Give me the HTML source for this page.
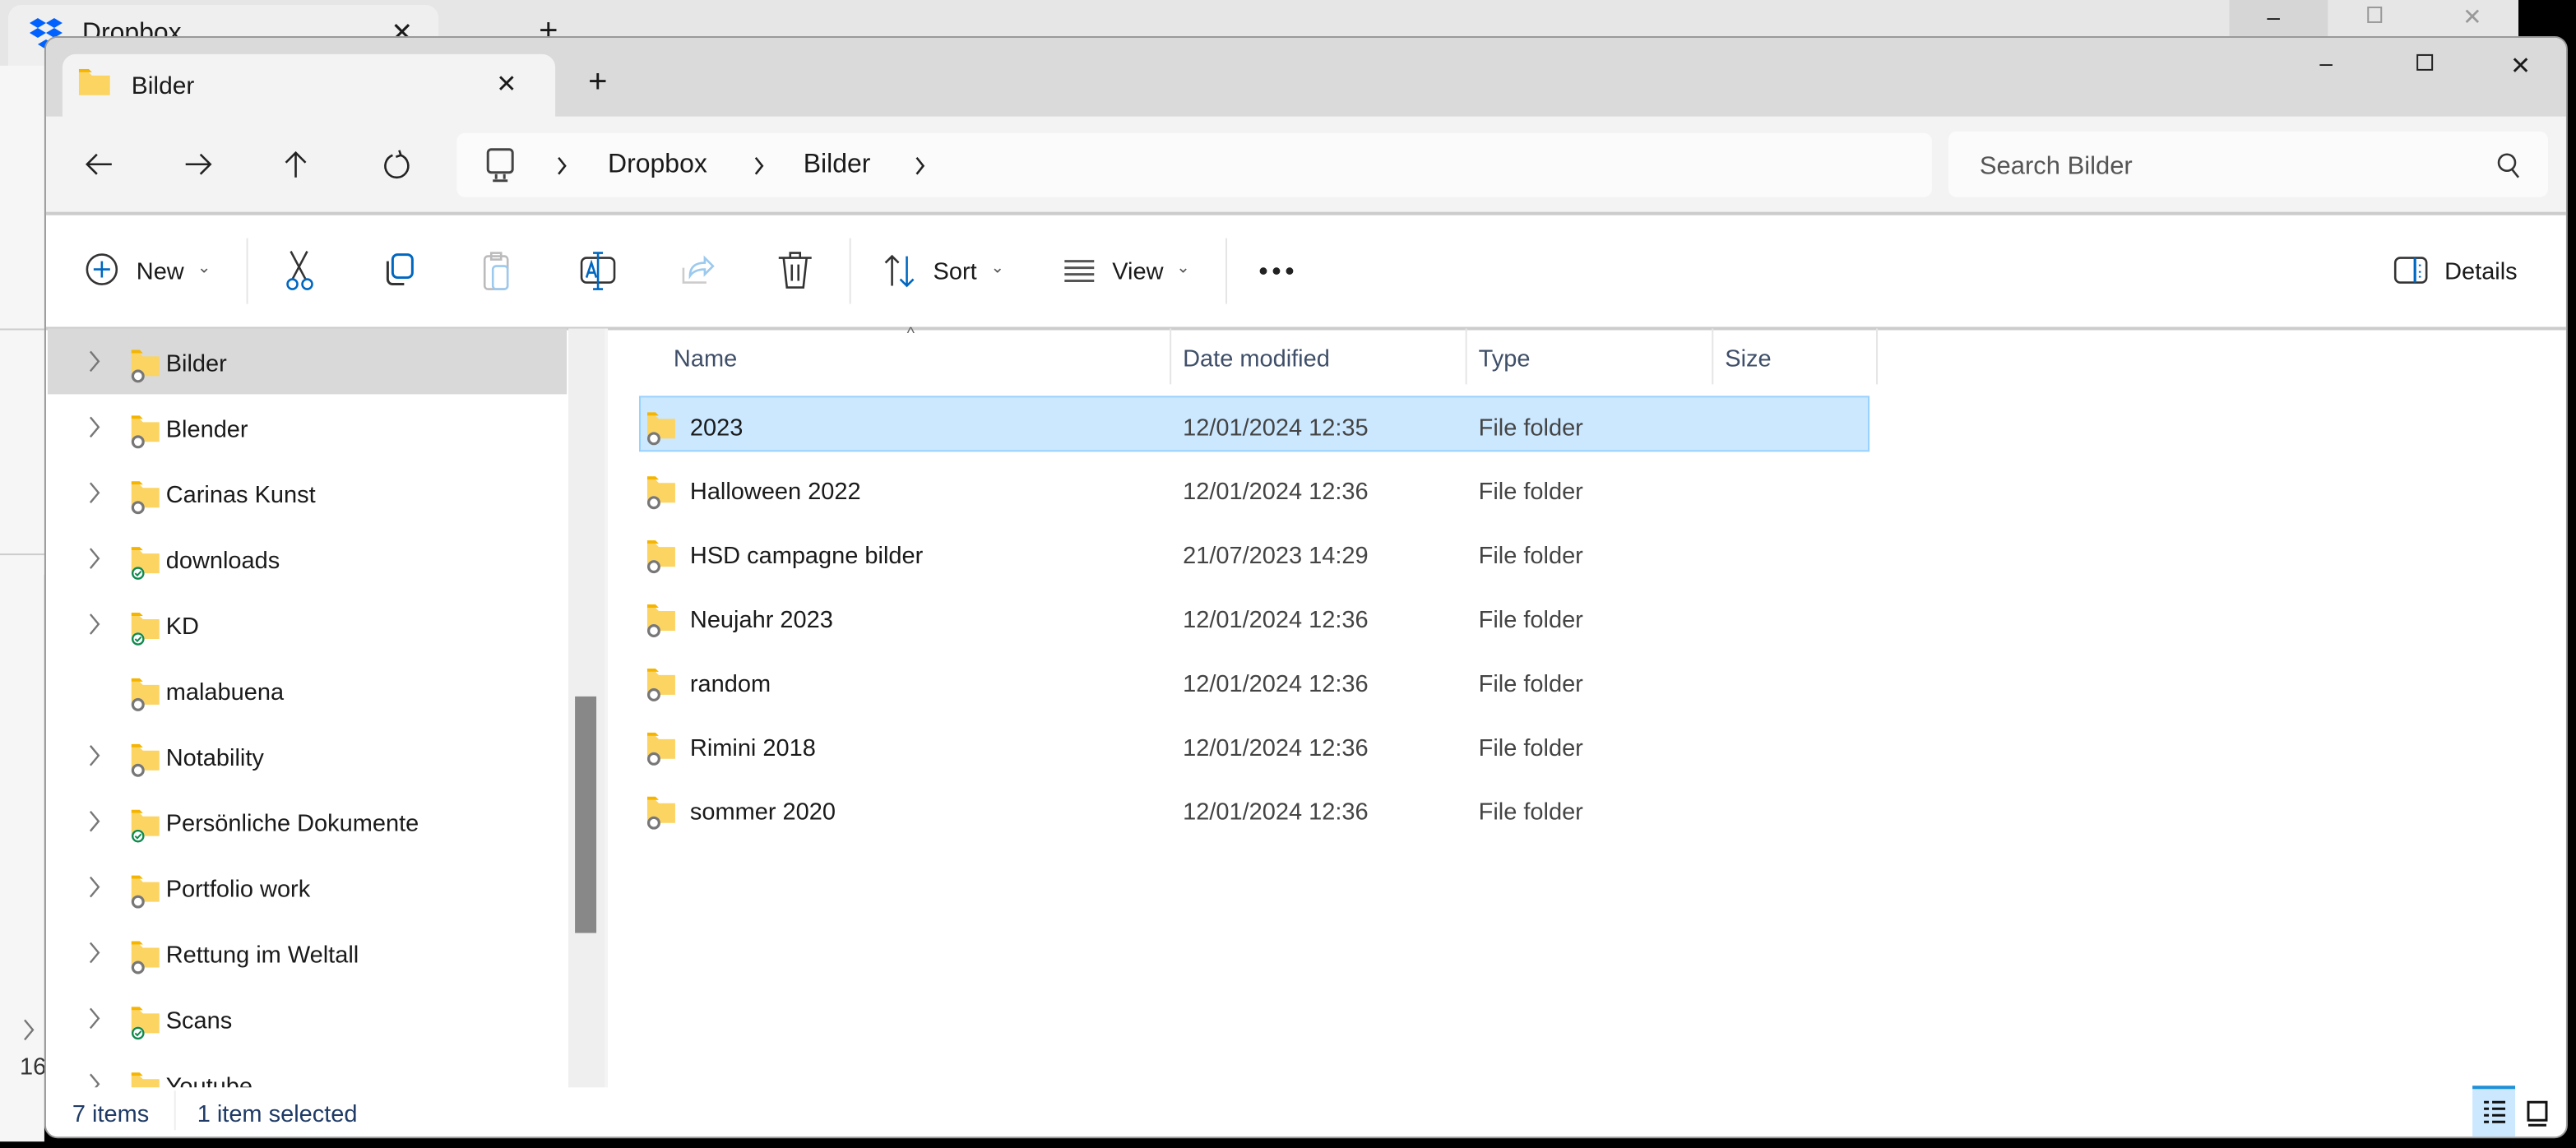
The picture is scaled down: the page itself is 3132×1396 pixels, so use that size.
<!DOCTYPE html>
<html><head><meta charset="utf-8"><style>
*{box-sizing:border-box;margin:0;padding:0}
html,body{width:3132px;height:1395px;overflow:hidden;background:#000}
#s{position:absolute;left:0;top:0;width:1568px;height:699px;transform:scale(1.9974);transform-origin:0 0;font-family:"Segoe UI","Liberation Sans",sans-serif;color:#1a1a1a;font-size:14.5px}
.a{position:absolute}
.t{position:absolute;white-space:nowrap;margin-top:2px}
</style></head><body><div id="s">
<!-- back window -->
<div class="a" style="left:0;top:0;width:1533px;height:350px;background:#e6e6e6"></div>
<div class="a" style="left:5px;top:3px;width:262px;height:80px;background:#efefef;border-radius:8px 8px 0 0"></div>
<div class="a" style="left:0;top:40px;width:27px;height:655px;background:#f6f6f6"></div>
<div class="a" style="left:0;top:200px;width:27px;height:1px;background:#ccc"></div>
<div class="a" style="left:0;top:337px;width:27px;height:1px;background:#ccc"></div>
<svg class="a" style="left:17px;top:10px" width="22" height="20" viewBox="0 0 22 20"><path d="M6 1l5 3-5 3-5-3zM16 1l5 3-5 3-5-3zM6 7l5 3-5 3-5-3zM16 7l5 3-5 3-5-3zM11 14l5 3-5 3-5-3z" fill="#0061fe"/></svg>
<div class="t" style="left:50px;top:10px;font-size:16px">Dropbox</div>
<div class="t" style="left:238px;top:8px;font-size:16px">✕</div>
<div class="t" style="left:328px;top:6px;font-size:20px">+</div>
<div class="a" style="left:1357px;top:0;width:60px;height:22px;background:#d6d6d6"></div>
<div class="t" style="left:1380px;top:0px;font-size:14px">–</div>
<div class="a" style="left:1441px;top:4px;width:9px;height:10px;border:1px solid #999"></div>
<div class="t" style="left:1499px;top:0px;font-size:14px;color:#999">✕</div>
<svg class="a" style="left:14px;top:620px" width="8" height="14" fill="none" stroke="#777" stroke-width="1.2"><path d="M1 1l5 6-5 6"/></svg>
<div class="t" style="left:12px;top:640px;color:#333">16</div>

<!-- front window -->
<div class="a" style="left:27px;top:22px;width:1536px;height:671px;background:#fff;border-radius:8px;overflow:hidden;border:1px solid #999">
 <div class="a" style="left:0;top:0;width:100%;height:48px;background:#dadada"></div>
 <div class="a" style="left:10px;top:10px;width:300px;height:40px;background:#f3f3f3;border-radius:8px 8px 0 0"></div>
 <div class="a" style="left:0;top:48px;width:100%;height:60px;background:#f3f3f3;border-bottom:2px solid #ccc"></div>
 <div class="a" style="left:0;top:176px;width:100%;height:2px;background:#ccc"></div>
</div>
<svg class="a" style="left:48px;top:42px" width="19" height="16"><path d="M0 2h6l2 2h11v12H0z" fill="#fcd462"/><path d="M0 0h6l2 2H0z" fill="#f4b400"/></svg>
<div class="t" style="left:80px;top:42px;font-size:15px">Bilder</div>
<div class="t" style="left:302px;top:40px;font-size:15px">✕</div>
<div class="t" style="left:358px;top:37px;font-size:20px">+</div>
<div class="t" style="left:1412px;top:28px;font-size:14px">–</div>
<div class="a" style="left:1471px;top:33px;width:10px;height:10px;border:1.2px solid #222"></div>
<div class="t" style="left:1528px;top:29px;font-size:15px">✕</div>

<!-- address row -->
<svg class="a" style="left:50px;top:90px" width="200" height="20" fill="none" stroke="#222" stroke-width="1.3"><path d="M18 10H3M9 4l-6 6 6 6"/><path d="M63 10h15M72 4l6 6-6 6"/><path d="M130 18V3M124 9l6-6 6 6"/><path d="M194 4.5a7 7 0 1 1-5 0M194 4.5l-1-3M194 4.5l-3 1"/></svg>
<div class="a" style="left:278px;top:81px;width:898px;height:39px;background:#fbfbfb;border-radius:5px"></div>
<svg class="a" style="left:295px;top:90px" width="20" height="22" fill="none" stroke="#444" stroke-width="1.5"><rect x="2" y="1" width="15" height="14" rx="2"/><path d="M7 16v3M12 16v3M5 20h9"/></svg>
<svg class="a" style="left:338px;top:95px" width="240" height="12" fill="none" stroke="#222" stroke-width="1.3"><path d="M2 1l4 5-4 5M122 1l4 5-4 5M220 1l4 5-4 5"/></svg>
<div class="t" style="left:370px;top:90px;font-size:16px">Dropbox</div>
<div class="t" style="left:489px;top:90px;font-size:16px">Bilder</div>
<div class="a" style="left:1186px;top:80px;width:365px;height:40px;background:#fbfbfb;border-radius:5px"></div>
<div class="t" style="left:1205px;top:91px;font-size:15.5px;color:#555">Search Bilder</div>
<svg class="a" style="left:1519px;top:93px" width="16" height="16" fill="none" stroke="#333" stroke-width="1.3"><circle cx="7" cy="6" r="5"/><path d="M10 10l4 5"/></svg>

<!-- toolbar -->
<svg class="a" style="left:52px;top:154px" width="22" height="22" fill="none" stroke-width="1.3"><circle cx="10" cy="10" r="9" stroke="#333"/><path d="M10 5v10M5 10h10" stroke="#0067c0"/></svg>
<div class="t" style="left:83px;top:156px">New</div>
<div class="t" style="left:120px;top:156px;font-size:10px;color:#555">⌄</div>
<div class="a" style="left:150px;top:145px;width:1px;height:40px;background:#e5e5e5"></div>
<svg class="a" style="left:172px;top:152px" width="24" height="26" fill="none" stroke-width="1.3"><path d="M5 1l9 17M15 1L6 18" stroke="#333"/><circle cx="6" cy="21" r="3" stroke="#0067c0"/><circle cx="15" cy="21" r="3" stroke="#0067c0"/></svg>
<svg class="a" style="left:233px;top:153px" width="24" height="24" fill="none" stroke-width="1.5"><rect x="6" y="2" width="12" height="14" rx="3" stroke="#0067c0"/><path d="M3 6v11a3 3 0 0 0 3 3h7" stroke="#333"/></svg>
<svg class="a" style="left:293px;top:152px" width="24" height="26" fill="none" stroke-width="1.3"><rect x="2" y="4" width="14" height="20" rx="2" stroke="#bbb"/><rect x="7" y="10" width="9" height="14" rx="2" stroke="#9cc9ee"/><rect x="6" y="2" width="6" height="4" stroke="#bbb"/></svg>
<svg class="a" style="left:352px;top:152px" width="26" height="26" fill="none" stroke-width="1.3"><rect x="2" y="5" width="20" height="15" rx="3" stroke="#333"/><path d="M12 2v22M9 2h6M9 24h6" stroke="#0067c0"/><path d="M5 17l3-9 3 9M6 14h4" stroke="#0067c0"/></svg>
<svg class="a" style="left:413px;top:153px" width="24" height="24" fill="none" stroke-width="1.3"><path d="M3 10v9h14" stroke="#ccc"/><path d="M7 15c0-6 4-8 9-8V4l5 5-5 5v-3c-4 0-7 1-9 4z" stroke="#9cc9ee"/></svg>
<svg class="a" style="left:473px;top:152px" width="22" height="26" fill="none" stroke="#333" stroke-width="1.3"><path d="M1 5h20M8 5V2h6v3M4 5l2 18h10l2-18M9 9v10M13 9v10"/></svg>
<div class="a" style="left:517px;top:145px;width:1px;height:40px;background:#e5e5e5"></div>
<svg class="a" style="left:537px;top:154px" width="24" height="22" fill="none" stroke-width="1.3"><path d="M6 20V2M2 6l4-4 4 4" stroke="#333"/><path d="M15 2v18M11 16l4 4 4-4" stroke="#0067c0"/></svg>
<div class="t" style="left:568px;top:156px">Sort</div>
<div class="t" style="left:603px;top:156px;font-size:10px;color:#555">⌄</div>
<svg class="a" style="left:647px;top:157px" width="20" height="16" stroke="#555" stroke-width="1.5"><path d="M1 2h18M1 6h18M1 10h18M1 14h18"/></svg>
<div class="t" style="left:677px;top:156px">View</div>
<div class="t" style="left:716px;top:156px;font-size:10px;color:#555">⌄</div>
<div class="a" style="left:746px;top:145px;width:1px;height:40px;background:#e5e5e5"></div>
<svg class="a" style="left:766px;top:161px" width="24" height="8" fill="#222"><circle cx="3" cy="4" r="2.2"/><circle cx="11" cy="4" r="2.2"/><circle cx="19" cy="4" r="2.2"/></svg>
<svg class="a" style="left:1457px;top:156px" width="22" height="18" fill="none" stroke-width="1.3"><rect x="1" y="1" width="19" height="15" rx="3" stroke="#333"/><path d="M13 1v15" stroke="#0067c0" stroke-width="1.6"/><path d="M16 5v1M16 9v1M16 12v1" stroke="#0067c0"/></svg>
<div class="t" style="left:1488px;top:156px">Details</div>

<!-- nav pane -->
<div class="a" style="left:29px;top:200px;width:316px;height:40px;background:#d9d9d9"></div>
<div class="a" style="left:346px;top:200px;width:22px;height:462px;background:#efefef"></div>
<div class="a" style="left:350px;top:424px;width:13px;height:144px;background:#888"></div>
<div class="a" style="left:368px;top:200px;width:2px;height:462px;background:#f4f4f4"></div>
<div style="position:absolute;left:0;top:0;width:345px;height:662px;overflow:hidden">
<svg class="a" style="left:54px;top:0" width="10" height="680" fill="none" stroke="#777" stroke-width="1.2"><path d="M1 214l5 6-5 6M1 254l5 6-5 6M1 294l5 6-5 6M1 334l5 6-5 6M1 374l5 6-5 6M1 454l5 6-5 6M1 494l5 6-5 6M1 534l5 6-5 6M1 574l5 6-5 6M1 614l5 6-5 6M1 654l5 6-5 6"/></svg>
<div class="t" style="left:101px;top:212px">Bilder</div>
<div class="t" style="left:101px;top:252px">Blender</div>
<div class="t" style="left:101px;top:292px">Carinas Kunst</div>
<div class="t" style="left:101px;top:332px">downloads</div>
<div class="t" style="left:101px;top:372px">KD</div>
<div class="t" style="left:101px;top:412px">malabuena</div>
<div class="t" style="left:101px;top:452px">Notability</div>
<div class="t" style="left:101px;top:492px">Persönliche Dokumente</div>
<div class="t" style="left:101px;top:532px">Portfolio work</div>
<div class="t" style="left:101px;top:572px">Rettung im Weltall</div>
<div class="t" style="left:101px;top:612px">Scans</div>
<div class="t" style="left:101px;top:652px">Youtube</div>
<svg class="a" style="left:78px;top:0" width="22" height="680">
<defs><g id="fc"><path d="M2 2h5l2 2h10v12H2z" fill="#fcd462"/><path d="M2 0h5l2 2H2z" fill="#f4b400"/><circle cx="6" cy="16" r="4" fill="#fff"/><circle cx="6" cy="16" r="3.2" fill="none" stroke="#777" stroke-width="1.6"/></g>
<g id="fg"><path d="M2 2h5l2 2h10v12H2z" fill="#fcd462"/><path d="M2 0h5l2 2H2z" fill="#f4b400"/><circle cx="6" cy="16" r="4" fill="#fff"/><circle cx="6" cy="16" r="3.3" fill="none" stroke="#108a4e" stroke-width="1.2"/><path d="M4.3 16l1.3 1.3 2.3-2.5" fill="none" stroke="#108a4e" stroke-width="1"/></g></defs>
<use href="#fc" y="213"/><use href="#fc" y="253"/><use href="#fc" y="293"/><use href="#fg" y="333"/><use href="#fg" y="373"/><use href="#fc" y="413"/><use href="#fc" y="453"/><use href="#fg" y="493"/><use href="#fc" y="533"/><use href="#fc" y="573"/><use href="#fg" y="613"/><use href="#fg" y="653"/>
</svg>
</div>

<!-- content -->
<div class="t" style="left:552px;top:196px;font-size:10px;color:#666">^</div>
<div class="t" style="left:410px;top:209px;color:#3f4f69">Name</div>
<div class="t" style="left:720px;top:209px;color:#3f4f69">Date modified</div>
<div class="t" style="left:900px;top:209px;color:#3f4f69">Type</div>
<div class="t" style="left:1050px;top:209px;color:#3f4f69">Size</div>
<div class="a" style="left:712px;top:200px;width:1px;height:34px;background:#e5e5e5"></div>
<div class="a" style="left:892px;top:200px;width:1px;height:34px;background:#e5e5e5"></div>
<div class="a" style="left:1042px;top:200px;width:1px;height:34px;background:#e5e5e5"></div>
<div class="a" style="left:1142px;top:200px;width:1px;height:34px;background:#e5e5e5"></div>
<div class="a" style="left:389px;top:241px;width:749px;height:34px;background:#cce8ff;border:1px solid #99d1ff"></div>
<svg class="a" style="left:392px;top:0" width="22" height="520">
<use href="#fc" y="251"/><use href="#fc" y="290"/><use href="#fc" y="329"/><use href="#fc" y="368"/><use href="#fc" y="407"/><use href="#fc" y="446"/><use href="#fc" y="485"/></svg>
<div class="t" style="left:420px;top:251px">2023</div><div class="t" style="left:720px;top:251px;color:#444">12/01/2024 12:35</div><div class="t" style="left:900px;top:251px;color:#444">File folder</div>
<div class="t" style="left:420px;top:290px">Halloween 2022</div><div class="t" style="left:720px;top:290px;color:#444">12/01/2024 12:36</div><div class="t" style="left:900px;top:290px;color:#444">File folder</div>
<div class="t" style="left:420px;top:329px">HSD campagne bilder</div><div class="t" style="left:720px;top:329px;color:#444">21/07/2023 14:29</div><div class="t" style="left:900px;top:329px;color:#444">File folder</div>
<div class="t" style="left:420px;top:368px">Neujahr 2023</div><div class="t" style="left:720px;top:368px;color:#444">12/01/2024 12:36</div><div class="t" style="left:900px;top:368px;color:#444">File folder</div>
<div class="t" style="left:420px;top:407px">random</div><div class="t" style="left:720px;top:407px;color:#444">12/01/2024 12:36</div><div class="t" style="left:900px;top:407px;color:#444">File folder</div>
<div class="t" style="left:420px;top:446px">Rimini 2018</div><div class="t" style="left:720px;top:446px;color:#444">12/01/2024 12:36</div><div class="t" style="left:900px;top:446px;color:#444">File folder</div>
<div class="t" style="left:420px;top:485px">sommer 2020</div><div class="t" style="left:720px;top:485px;color:#444">12/01/2024 12:36</div><div class="t" style="left:900px;top:485px;color:#444">File folder</div>

<!-- status -->
<div class="t" style="left:44px;top:669px;color:#1f3b66">7 items</div>
<div class="a" style="left:106px;top:664px;width:1px;height:24px;background:#eee"></div>
<div class="t" style="left:120px;top:669px;color:#1f3b66">1 item selected</div>
<div class="a" style="left:1505px;top:661px;width:26px;height:31px;background:#cce8ff;border-top:2px solid #1e90d8"></div>
<svg class="a" style="left:1511px;top:670px" width="44" height="16" stroke="#111" stroke-width="1.5" fill="none"><path d="M1 1h3M6 1h8M1 5h3M6 5h8M1 9h3M6 9h8M1 13h3M6 13h8"/><rect x="28" y="1" width="11" height="11"/><path d="M28 15h11"/></svg>
</div></body></html>
